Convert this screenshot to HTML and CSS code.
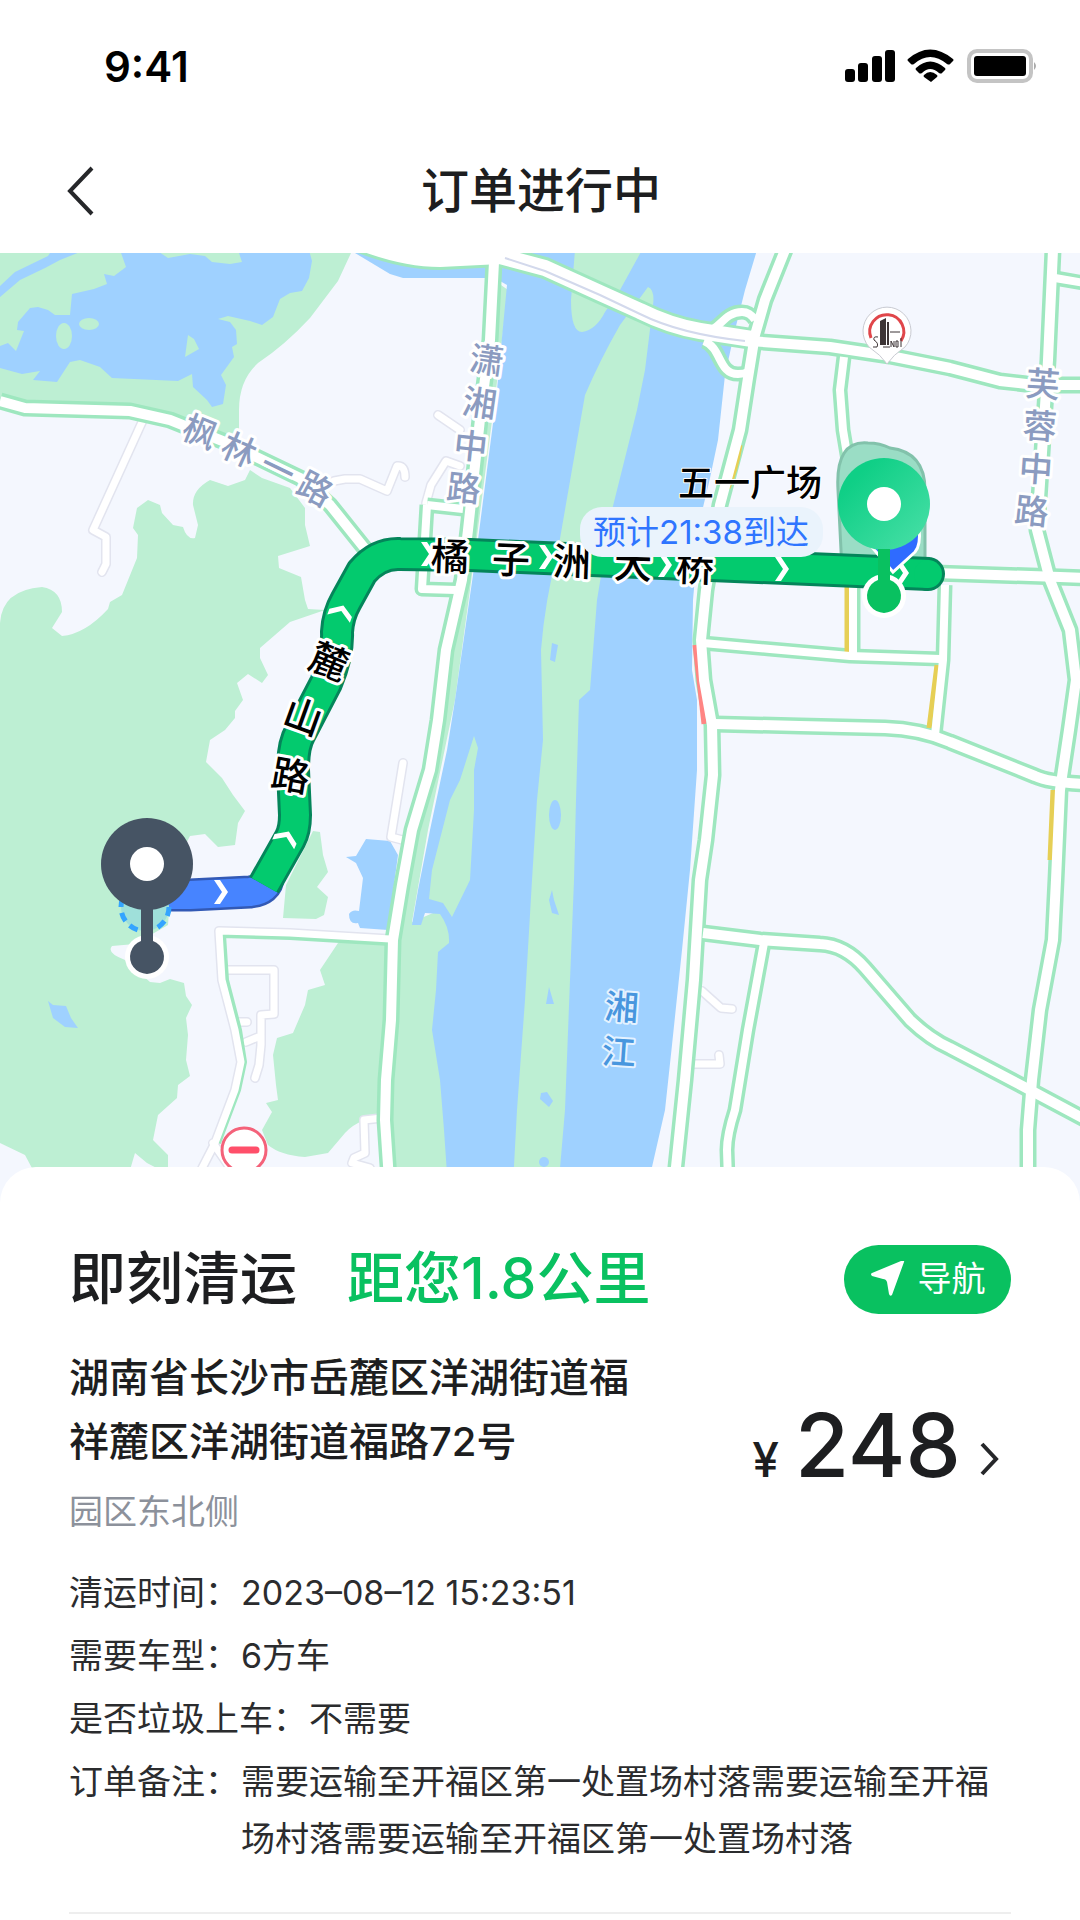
FILE: index.html
```html
<!DOCTYPE html>
<html lang="zh-CN">
<head>
    <meta charset="UTF-8">
    <meta name="viewport" content="width=device-width, initial-scale=1.0">
    <title>订单进行中</title>
    <link rel="stylesheet" href="styles.css">
</head>
<body>
    <header>
        <div class="status-bar">
            <span class="time">9:41</span>
            <svg class="status-icons" viewBox="0 0 192 36" aria-hidden="true">
                <rect x="1" y="21" width="10" height="13" rx="3"/>
                <rect x="14" y="15" width="10" height="19" rx="3"/>
                <rect x="28" y="8" width="10" height="26" rx="3"/>
                <rect x="41" y="2" width="10" height="32" rx="3"/>
                <path d="M64 11Q86-8 109 11 110 12 109 13L106 16Q105 17 103 16 86 2 70 16 68 17 67 16L64 13Q63 12 64 11z"/>
                <path d="M72 20Q86 7 101 20 102 21 101 22L98 25Q97 26 95 25 86 17 78 25 76 26 75 25L72 22Q71 21 72 20z"/>
                <path d="M80 27Q86 21 93 27 94 28 93 29L87 34 80 29Q79 28 80 27z"/>
                <rect class="battery-shell" x="125" y="3" width="62" height="30" rx="8"/>
                <rect x="130" y="8" width="52" height="20" rx="3"/>
                <path class="battery-cap" d="M190 14q4 4 0 8z"/>
            </svg>
        </div>
        <div class="nav-bar">
            <button class="back" aria-label="返回">
                <svg viewBox="0 0 28 52"><path d="M26 3L4 26l22 23"/></svg>
            </button>
            <h1>订单进行中</h1>
        </div>
    </header>

    <svg class="map" viewBox="0 253 1080 950">
        <defs>
            <linearGradient id="pin-fill" x1="0" y1="0" x2="1" y2="1">
                <stop offset="0.2" stop-color="#0fcf86"/>
                <stop offset="1" stop-color="#4be0a8"/>
            </linearGradient>
            <g id="streets">
                <path d="M494 262L490 340 481 410 468 530 462 580 446 650 438 720 430 770 412 830 402 885 393 940 391 1020 386 1080 385 1120 391 1210"/>
                <path d="M785 250L765 300 755 335 748 378 740 430 720 505 706 590 701 640 704 680 712 725 713 775 706 840 700 880 694 980 685 1080 676 1167 673 1210"/>
                <path d="M1053 250L1048 360 1037 530 1050 580 1070 630 1076 680 1069 730 1060 790 1056 880 1053 940 1040 1010 1032 1080 1028 1130 1028 1210"/>
                <path d="M750 341L830 347 890 356 950 368 1000 381 1035 385H1090"/>
                <path d="M0 401L25 408 130 411 170 420 225 442 300 478 330 505 370 555"/>
                <path d="M715 724L800 726 885 728Q920 729 950 742L1035 776Q1050 783 1090 784"/>
                <path d="M703 933L760 940 820 944Q845 945 865 968L910 1020Q930 1039 950 1048L1030 1090 1090 1122"/>
                <path d="M935 573L1060 577 1090 578"/>
            </g>
            <g id="lanes">
                <path d="M844 357L840 390 843 430 848 460 853 580V655"/>
                <path d="M945 585L943 660 935 735"/>
                <path d="M703 643L770 649 850 656 940 659"/>
                <path d="M764 943L748 1030 735 1110Q727 1135 727 1150L729 1210"/>
                <path d="M706 332C720 330 724 312 742 312Q750 312 755 320M704 341C722 348 718 374 738 374Q744 374 748 372"/>
                <path d="M1055 278L1090 284"/>
                <path d="M427 505L422 589 456 590M427 505L463 509"/>
            </g>
            <g id="alleys">
                <path d="M143 420L93 530 106 537 106 564 102 572"/>
                <path d="M334 481L345 479 360 479 387 491 397 466Q405 465 405 477"/>
                <path d="M438 415L460 430M460 466L446 461 431 485 426 503"/>
                <path d="M403 763L391 837 410 842"/>
                <path d="M228 970H274V1014L261 1015 261 1045 259 1065 255 1078M236 1022H247M246 1042L258 1037"/>
                <path d="M382 1118L364 1120 365 1153 354 1158 352 1163 370 1168 376 1190"/>
                <path d="M702 991L721 1008 732 1009M690 1064H720L719 1055"/>
            </g>
            <g id="bridge">
                <path d="M350 238Q400 259 440 259L500 256 545 268 600 293 640 311Q670 326 700 331L752 339"/>
            </g>
            <path id="west-lane" d="M390 939L290 933 219 931 222 980 235 1030 241 1062 235 1090 215 1143 196 1180M213 1143L235 1175"/>
            <path id="route" d="M264 885L290 839Q295 830 295 815L293 770Q293 745 300 733L326 683Q338 655 337 632 338 615 346 601L362 572Q378 553 400 554L470 555 929 574"/>
            <path id="arrow" d="M-7-12H-1L7 0-1 12H-7L1 0z"/>
        </defs>

        <rect class="land" y="253" width="1080" height="950"/>

        <!-- parks and hills -->
        <g class="park">
            <path d="M0 253H351L338 281 310 318Q285 345 258 363 239 380 239 410V440L170 418 130 409 25 406 0 399z"/>
            <path d="M0 623Q2 590 42 587 62 590 62 612L52 628 62 636Q85 634 108 609L110 602 122 595 137 558 138 535 133 528 137 508 148 500 160 505 162 513 173 525 183 527Q187 540 195 538L198 525 193 505Q192 490 210 480L228 486 245 480 250 470 262 478 290 488 305 508 305 525 310 546 278 556 279 568 301 577 305 600 308 609 325 610 290 622 260 648 260 658 268 675 262 683 248 674 237 683 243 700 235 711 235 718 225 730 210 740 206 762 222 778 233 795 245 811 238 823 235 845 218 847 205 834 190 836 172 870 168 925 135 944 112 946Q106 953 125 960L150 982 160 983 170 979 184 983 186 996 192 1005 186 1018 188 1035 186 1060 190 1076 178 1085 177 1098 158 1115 153 1140 168 1155 168 1203H0z"/>
            <path d="M313 831L320 832 323 855 328 872 317 887 328 897 324 915 316 919 283 918 286 885z"/>
            <path d="M338 943L388 941 388 1115Q358 1118 345 1133L328 1153 305 1157Q280 1155 268 1145L262 1130 272 1112 266 1103 278 1100 276 1085 273 1055 277 1038 293 1033 305 1005 308 990 325 985 320 970z"/>
            <path d="M494 280L508 290 496 390 470 590 455 700 428 830 412 922 440 910 460 935 460 1203H391L388 950 412 830 438 720 462 580z"/>
        </g>
        <path class="land" d="M0 1143L25 1155 33 1170H130L135 1153 147 1163 170 1175V1203H0z"/>

        <!-- water -->
        <g class="water">
            <path d="M0 286L15 272 48 256 52 250H85L60 260 45 268 20 280 0 297z"/>
            <path d="M120 250L126 267 114 276 104 274 107 284 94 289 72 294 70 315H55L48 310 38 307 30 308 18 322 17 330 24 331 18 346 16 351 8 343 0 346V368L22 374 40 371 33 380 57 382 70 362 80 360 100 367 112 378 178 381 192 374 193 387 207 400 212 407 223 404 226 385 221 375 234 357 232 347 237 344 236 330 230 322 218 319 228 316 250 321 262 325 273 317 280 299 290 293 302 291 309 278 312 261 309 250z"/>
            <path d="M350 250L390 274 403 278H490V262L440 264 375 250z"/>
            <path d="M500 250V281L507 285 496 400 478 540 455 700 447 750 430 830 418 890 412 925 421 925 425 913 440 914Q450 928 449 943L438 952 436 990 432 1030 440 1080 444 1130 449 1203H645L652 1167 665 1110 672 1045 682 950 690 870 697 770V700L692 670 693 600 700 520 710 478 718 440 725 375 735 330 745 290 757 250z"/>
            <path d="M366 839L390 841 398 855 388 930 360 928 358 923Q349 925 349 914 352 909 359 911L363 878 356 863 346 857 356 856z"/>
            <path d="M48 1001L53 1005 66 1006 71 1018 78 1028 65 1027 53 1018z"/>
        </g>

        <!-- islands in the lake and in the river -->
        <g class="park">
            <path d="M156 250L168 258 190 254 205 256 212 262 230 264 242 262 238 250z"/>
            <ellipse cx="64" cy="336" rx="8" ry="13"/>
            <ellipse cx="89" cy="324" rx="10" ry="6"/>
            <path d="M188 335L194 339 199 349 185 357z"/>
            <path d="M474 736L478 748 474 770 474 810 470 880 452 917 443 903 429 899 432 870 450 800 460 780z"/>
            <path d="M575 250L571 300Q571 332 582 332 596 330 605 312L620 290 642 250z"/>
            <path d="M648 287Q655 290 653 305L645 370 637 410 612 510 597 600 590 690 579 700 576 800 574 880 570 980 565 1110 557 1203H512L517 1110 525 1000 532 880 537 800 543 740 541 650Q545 600 558 550L585 395Q600 360 620 325z"/>
        </g>
        <g class="water">
            <ellipse cx="555" cy="815" rx="6" ry="15"/>
            <path d="M552 643L558 645 555 662 550 660zM552 890L549 900 552 913 559 915 554 900zM549 987L546 1004 554 1004zM541 1093L547 1092 553 1101 549 1107 540 1099z"/>
            <circle cx="544" cy="1162" r="5"/>
        </g>

        <!-- roads -->
        <use href="#alleys" class="road alley-edge"/>
        <use href="#alleys" class="road alley-fill"/>
        <use href="#bridge" class="road bridge-edge"/>
        <use href="#west-lane" class="road alley-edge"/>
        <use href="#lanes" class="road lane-edge"/>
        <use href="#streets" class="road street-edge"/>
        <g class="road traffic">
            <path class="slow" d="M740 445Q736 470 728 488M847 585V659M937 665L929 728M1053 790L1050 860"/>
            <path class="jam" d="M695 645L704 724"/>
        </g>
        <path class="road west-green" d="M390 943L290 937 223 935 226 980 239 1030 244 1062 238 1090 218 1143"/>
        <use href="#west-lane" class="road alley-fill"/>
        <use href="#lanes" class="road lane-fill"/>
        <use href="#bridge" class="road bridge-fill"/>
        <use href="#streets" class="road street-fill"/>
        <path class="road bridge-line" d="M505 258L545 271 600 295 640 314Q680 334 745 341"/>

        <!-- destination area -->
        <path class="plaza" d="M842 570L838 490Q835 440 868 443 880 443 890 448 925 452 925 490V570z"/>

        <!-- planned route -->
        <path class="road walk-edge" d="M150 895H190L250 892Q268 890 268 877"/>
        <path class="road walk-fill" d="M150 895H190L250 892Q268 890 268 877"/>
        <circle class="route-edge-cap" cx="928" cy="574" r="17"/>
        <use href="#route" class="road route-edge"/>
        <use href="#route" class="road route-fill"/>
        <circle class="route-fill-cap" cx="928" cy="574" r="14"/>
        <g class="arrows">
            <use href="#arrow" transform="translate(221 892)"/>
            <use href="#arrow" transform="translate(286 838) rotate(-66)"/>
            <use href="#arrow" transform="translate(341 612) rotate(-70)"/>
            <use href="#arrow" transform="translate(428 554)"/>
            <use href="#arrow" transform="translate(546 557)"/>
            <use href="#arrow" transform="translate(665 565)"/>
            <use href="#arrow" transform="translate(782 569)"/>
            <use href="#arrow" transform="translate(902 573)"/>
        </g>

        <!-- street names, one glyph at a time along the road -->
        <g class="label street-name">
            <text transform="translate(487 358) rotate(8)">潇</text>
            <text transform="translate(480 401) rotate(8)">湘</text>
            <text transform="translate(471 444) rotate(6)">中</text>
            <text transform="translate(464 486) rotate(6)">路</text>
            <text transform="translate(201 430) rotate(22)">枫</text>
            <text transform="translate(240 448) rotate(24)">林</text>
            <text transform="translate(279 467) rotate(26)">一</text>
            <text transform="translate(316 487) rotate(28)">路</text>
            <text transform="translate(1043 382) rotate(4)">芙</text>
            <text transform="translate(1040 424) rotate(4)">蓉</text>
            <text transform="translate(1036 467) rotate(4)">中</text>
            <text transform="translate(1032 509) rotate(6)">路</text>
        </g>
        <g class="label river-name">
            <text transform="translate(622 1005) rotate(4)">湘</text>
            <text transform="translate(619 1050) rotate(4)">江</text>
        </g>
        <g class="label route-name">
            <text transform="translate(450 554) rotate(2)">橘</text>
            <text transform="translate(511 557) rotate(2)">子</text>
            <text transform="translate(572 559) rotate(2)">洲</text>
            <text transform="translate(633 562) rotate(2)">大</text>
            <text transform="translate(695 565) rotate(2)">桥</text>
            <text transform="translate(330 659) rotate(22)">麓</text>
            <text transform="translate(304 714) rotate(20)">山</text>
            <text transform="translate(291 773) rotate(10)">路</text>
        </g>
        <text class="label place-name" x="750" y="480">五一广场</text>
        <rect class="eta-box" x="580" y="507" width="243" height="50" rx="22"/>
        <text class="eta" x="701" y="532">预计21:38到达</text>

        <!-- shop marker -->
        <path class="poi" d="M887 364Q881 355 869 347A24 24 0 1 1 905 347Q893 355 887 364z"/>
        <path class="poi-ring" d="M871 338A17 17 0 1 1 901 341"/>
        <path class="poi-tower" d="M880 321L886 318V345H880zM887 322H889V345H887z"/>
        <path class="poi-letters" d="M878 337Q873 336 874 340 879 343 877 347H873M891 347V341L894 347V341M896 341V347H898V341zM901 338V347M883 347H890M890 332H900"/>

        <!-- no entry sign -->
        <circle class="no-entry" cx="244" cy="1150" r="22"/>
        <path class="no-entry-bar" d="M232 1150H256"/>

        <!-- pins -->
        <path class="current-tip" d="M866 540L893 572 915 552Q921 545 919 528z"/>
        <circle class="start-area" cx="145" cy="907" r="24"/>
        <g class="pin pin-end">
            <circle class="ring" cx="884" cy="596" r="22"/>
            <circle class="head" cx="884" cy="504" r="46"/>
            <path class="foot" d="M878 549H890V580A17 17 0 1 1 878 580z"/>
            <circle class="hole" cx="884" cy="504" r="17"/>
        </g>
        <g class="pin pin-start">
            <circle class="ring" cx="147" cy="957" r="22"/>
            <circle class="head" cx="147" cy="864" r="46"/>
            <path class="foot" d="M141 905H153V941A17 17 0 1 1 141 941z"/>
            <circle class="hole" cx="147" cy="864" r="17"/>
        </g>
    </svg>

    <main class="order-card">
        <div class="order-head">
            <h2>即刻清运</h2>
            <span class="distance">距您1.8公里</span>
            <button class="navigate">
                <svg viewBox="0 0 36 36" aria-hidden="true"><path d="M34 1L22 34Q20 36 19 33L17 21Q16 18 13 18L2 15Q0 13 2 12L31 0Q35-1 34 1z"/></svg>
                导航
            </button>
        </div>
        <div class="order-place">
            <div class="address">
                <p class="street">湖南省长沙市岳麓区洋湖街道福祥麓区洋湖街道福路72号</p>
                <p class="note">园区东北侧</p>
            </div>
            <a class="price" href="#">
                <span class="currency">¥</span>
                <span class="amount">248</span>
                <svg viewBox="0 0 20 36" aria-hidden="true"><path d="M3 3l14 15L3 33"/></svg>
            </a>
        </div>
        <dl>
            <div><dt>清运时间：</dt><dd>2023–08–12 15:23:51</dd></div>
            <div><dt>需要车型：</dt><dd>6方车</dd></div>
            <div><dt>是否垃圾上车：</dt><dd>不需要</dd></div>
            <div><dt>订单备注：</dt><dd>需要运输至开福区第一处置场村落需要运输至开福场村落需要运输至开福区第一处置场村落</dd></div>
        </dl>
    </main>
</body>
</html>
```

FILE: styles.css
```css
* {
    box-sizing: border-box;
}
body {
    margin: 0;
    font-family: Inter, "Noto Sans CJK SC", sans-serif;
    color: #1d1e20;
    background-color: #fff;
}
h1, h2, p, dl, dd {
    margin: 0;
}
button {
    border: none;
    padding: 0;
    font-family: inherit;
    cursor: pointer;
}

/* header */
.status-bar {
    display: flex;
    justify-content: space-between;
    align-items: center;
    height: 132px;
    padding: 0 44px 0 104px;
}
.time {
    font-size: 42px;
    font-weight: 600;
    color: #000;
}
.status-icons {
    width: 192px;
    height: 36px;
}
.battery-shell {
    fill: none;
    stroke: #c4c4c4;
    stroke-width: 4;
}
.battery-cap {
    fill: #aaa;
}
.nav-bar {
    display: grid;
    grid-template-columns: 94px 1fr 92px;
    align-items: center;
    height: 121px;
    padding: 0 0 4px;
}
.back {
    justify-self: end;
    height: 52px;
    background: none;
}
.back svg {
    display: block;
    width: 28px;
    height: 52px;
}
.back path, .price path {
    fill: none;
    stroke: #26272a;
    stroke-width: 4;
}
h1 {
    font-size: 48px;
    line-height: 60px;
    font-weight: 500;
    text-align: center;
}

/* map */
.map {
    display: block;
    width: 100%;
}
.land {
    fill: #f4f7fe;
}
.park {
    fill: #bdefd3;
}
.water {
    fill: #9fd1ff;
}
.road {
    fill: none;
    stroke-linejoin: round;
}
.street-edge, .lane-edge, .bridge-edge {
    stroke: #9ee7bf;
}
.street-fill, .lane-fill, .bridge-fill, .alley-fill {
    stroke: #fff;
}
.street-edge {
    stroke-width: 17;
}
.street-fill {
    stroke-width: 10;
}
.lane-edge {
    stroke-width: 15;
}
.lane-fill {
    stroke-width: 8;
}
.bridge-edge {
    stroke-width: 22;
}
.bridge-fill {
    stroke-width: 16;
}
.bridge-line {
    stroke: #d3d9ec;
    stroke-width: 2;
}
.alley-edge {
    stroke: #e2e4ef;
    stroke-width: 10;
    stroke-linecap: round;
}
.alley-fill {
    stroke-width: 7;
    stroke-linecap: round;
}
.west-green {
    stroke: #9ee7bf;
    stroke-width: 6;
}
.traffic {
    stroke-width: 5;
}
.slow {
    stroke: #e6cf55;
}
.jam {
    stroke: #ff8583;
}
.plaza {
    fill: #9addc5;
    stroke: #82c2ab;
    stroke-width: 3;
}
.walk-edge {
    stroke: #3259b5;
    stroke-width: 33;
}
.walk-fill {
    stroke: #4784ff;
    stroke-width: 28;
}
.route-edge {
    stroke: #04855a;
    stroke-width: 34;
}
.route-fill {
    stroke: #03ca6e;
    stroke-width: 28;
}
.route-edge-cap {
    fill: #04855a;
}
.route-fill-cap {
    fill: #03ca6e;
}
.arrows {
    fill: #fff;
}
.label {
    font-family: "Noto Sans CJK SC", sans-serif;
    font-size: 34px;
    font-weight: 500;
    text-anchor: middle;
    dominant-baseline: central;
    paint-order: stroke;
    stroke: #fff;
    stroke-width: 6;
    stroke-linejoin: round;
}
.street-name {
    fill: #8b9bc0;
}
.river-name {
    fill: #4896de;
    stroke: #e4f2ff;
    stroke-width: 4;
}
.route-name {
    font-size: 38px;
}
.place-name {
    font-size: 36px;
    stroke-width: 2;
}
.eta-box {
    fill: #eaf3fc;
}
.eta {
    font-size: 33px;
    fill: #2f75ff;
    text-anchor: middle;
    dominant-baseline: central;
}
.poi {
    fill: #fff;
    stroke: #c9cbd2;
    stroke-width: 1;
}
.poi-ring {
    fill: none;
    stroke: #e0464a;
    stroke-width: 3;
}
.poi-tower {
    fill: #3d3536;
}
.poi-letters {
    fill: none;
    stroke: #3d3536;
    stroke-width: 1;
}
.no-entry {
    fill: #fff;
    stroke: #f4627a;
    stroke-width: 3;
}
.no-entry-bar {
    stroke: #ff4f6a;
    stroke-width: 7;
    stroke-linecap: round;
}
.current-tip {
    fill: #2f6bff;
    stroke: #fff;
    stroke-width: 3;
}
.start-area {
    fill: #9fe0da;
    stroke: #34a4ff;
    stroke-width: 5;
    stroke-dasharray: 9 6;
}
.ring, .hole {
    fill: #fff;
}
.pin-end .head {
    fill: url(#pin-fill);
}
.pin-end .foot {
    fill: #09c160;
}
.pin-start .head, .pin-start .foot {
    fill: #465464;
}

/* order card */
.order-card {
    position: relative;
    margin-top: -36px;
    padding: 76px 69px 0;
    border-radius: 36px 36px 0 0;
    background-color: #fff;
}
.order-head {
    display: flex;
    align-items: center;
    height: 72px;
}
h2, .distance {
    font-size: 57px;
    line-height: 72px;
    font-weight: 500;
}
.distance {
    margin-left: 50px;
    color: #09c160;
}
.navigate {
    display: flex;
    align-items: center;
    justify-content: center;
    gap: 12px;
    width: 167px;
    height: 69px;
    margin-left: auto;
    border-radius: 35px;
    font-size: 34px;
    line-height: 66px;
    color: #fff;
    background-color: #09c160;
}
.navigate svg {
    width: 36px;
    height: 36px;
    fill: #fff;
}
.order-place {
    display: flex;
    justify-content: space-between;
    margin-top: 31px;
}
.address {
    width: 568px;
}
.street {
    font-size: 40px;
    line-height: 64px;
    font-weight: 500;
}
.note {
    margin-top: 10px;
    font-size: 34px;
    line-height: 56px;
    color: #8c919b;
}
.price {
    display: flex;
    align-items: baseline;
    align-self: flex-start;
    margin-top: 49px;
    padding-right: 12px;
    color: inherit;
    text-decoration: none;
}
.currency {
    margin-right: 16px;
    font-size: 48px;
    line-height: 100px;
    font-weight: 500;
}
.amount {
    margin-right: 18px;
    font-size: 88px;
    line-height: 100px;
    font-weight: 500;
}
.price svg {
    width: 20px;
    height: 36px;
}
dl {
    padding: 18px 0 45px;
    border-bottom: 2px solid #eee;
    font-size: 34px;
    line-height: 57px;
    color: #2b2c2e;
}
dl div {
    display: flex;
    margin-top: 6px;
}
dt {
    flex: none;
    padding-right: 2px;
}
```
